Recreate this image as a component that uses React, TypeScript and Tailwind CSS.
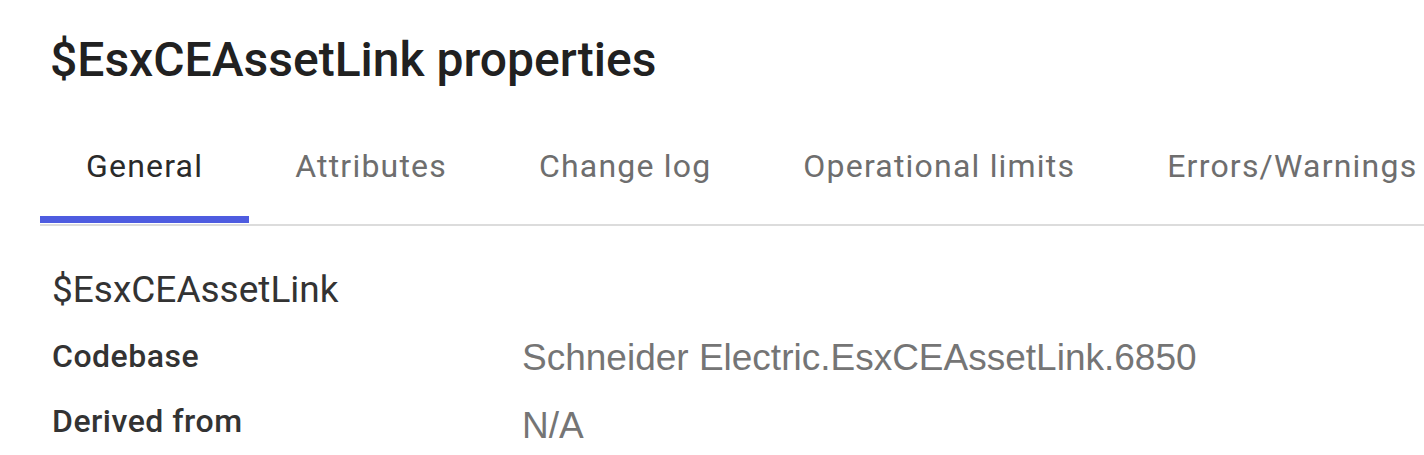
import React from "react";

const tabs = ["General", "Attributes", "Change log", "Operational limits", "Errors/Warnings"];

export default function App() {
  return (
    <div
      className="w-[1424px] h-[455px] bg-white overflow-hidden"
      style={{ fontFamily: "Roboto, 'Noto Sans', sans-serif" }}
    >
      <div className="pl-[50px] pt-[32px]">
        <h1 className="text-[48px] leading-[56px] font-medium text-[#212121]">
          $EsxCEAssetLink properties
        </h1>
      </div>

      <div className="ml-[40px] mt-[28px] w-[1500px]">
        <div className="flex">
          {tabs.map((t, i) => (
            <div key={t} className="flex flex-col">
              <div
                className={
                  "h-[100px] px-[46px] flex items-center text-[32px] leading-[36px] font-normal tracking-[1.2px] whitespace-nowrap " +
                  (i === 0 ? "text-[#2a2a2a]" : "text-[#6e6e6e]")
                }
              >
                {t}
              </div>
              <div className={"h-[7px] " + (i === 0 ? "bg-[#4e5ce0]" : "bg-transparent")} />
            </div>
          ))}
        </div>
        <div className="h-[2px] bg-[#dcdcdc] mt-[1px]" />
      </div>

      <div className="pl-[52px] pt-[42px]">
        <div className="text-[37px] leading-[44px] text-[#333333]">$EsxCEAssetLink</div>
        <div className="mt-[24px] flex flex-col">
          <div className="flex items-start h-[65px]">
            <div className="w-[470px] text-[32px] leading-[40px] font-medium tracking-[0.5px] text-[#333333]">
              Codebase
            </div>
            <div
              className="pt-[2px] text-[37px] leading-[40px] text-[#757575] whitespace-nowrap"
              style={{ fontFamily: "'Liberation Sans', Arial, sans-serif" }}
            >
              Schneider Electric.EsxCEAssetLink.6850
            </div>
          </div>
          <div className="flex items-start h-[65px]">
            <div className="w-[470px] text-[32px] leading-[40px] font-medium tracking-[0.5px] text-[#333333]">
              Derived from
            </div>
            <div
              className="pt-[5px] text-[37px] leading-[40px] text-[#757575] whitespace-nowrap"
              style={{ fontFamily: "'Liberation Sans', Arial, sans-serif" }}
            >
              N/A
            </div>
          </div>
        </div>
      </div>
    </div>
  );
}
